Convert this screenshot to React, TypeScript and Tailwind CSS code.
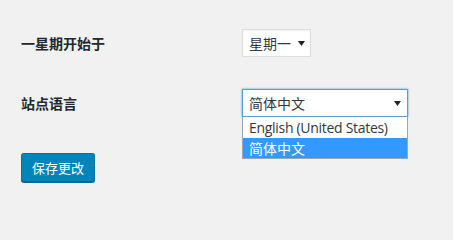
import React from "react";

const font = { fontFamily: '"Noto Sans CJK SC", "Open Sans", sans-serif' };

function Arrow() {
  return (
    <svg width="7" height="5" viewBox="0 0 7 5" className="shrink-0">
      <path d="M0 0 H7 L3.5 5 Z" fill="#222" />
    </svg>
  );
}

export default function App() {
  return (
    <div
      className="min-h-screen w-full bg-[#f1f1f1] pl-[21px] pt-[29px] text-[14px] text-[#23282d]"
      style={font}
    >
      <div className="flex h-[28px] items-center">
        <div className="w-[221px] font-bold leading-none">一星期开始于</div>
        <div className="flex h-[28px] w-[69px] items-center justify-between border border-[#ddd] bg-white pl-[6px] pr-[5px] shadow-[inset_0_1px_2px_rgba(0,0,0,0.07)]">
          <span className="leading-none text-[#32373c]">星期一</span>
          <Arrow />
        </div>
      </div>

      <div className="mt-[32px] flex h-[28px] items-center">
        <div className="w-[221px] font-bold leading-none">站点语言</div>
        <div className="relative">
          <div className="flex h-[28px] w-[166px] items-center justify-between border border-[#5b9dd9] bg-white pl-[6px] pr-[6px] shadow-[0_0_2px_rgba(30,140,190,0.8)]">
            <span className="leading-none text-[#32373c]">简体中文</span>
            <Arrow />
          </div>
          <div className="absolute left-0 top-[28px] z-10 w-[166px] border border-t-0 border-[#97a6b5] bg-white">
            <div
              className="flex h-[21px] items-center pl-[6px] text-[14px] leading-none text-[#32373c]"
              style={{ fontFamily: '"Open Sans", "Noto Sans CJK SC", sans-serif', letterSpacing: "-0.3px" }}
            >
              English (United States)
            </div>
            <div className="flex h-[20px] items-center bg-[#3399ff] pl-[6px] leading-none text-white">
              简体中文
            </div>
          </div>
        </div>
      </div>

      <div className="mt-[36px]">
        <button className="h-[29px] rounded-[3px] border border-[#0073aa] border-b-[#006799] bg-[#0085ba] px-[10px] text-[13px] leading-none text-white shadow-[0_1px_0_#006799]">
          保存更改
        </button>
      </div>
    </div>
  );
}
